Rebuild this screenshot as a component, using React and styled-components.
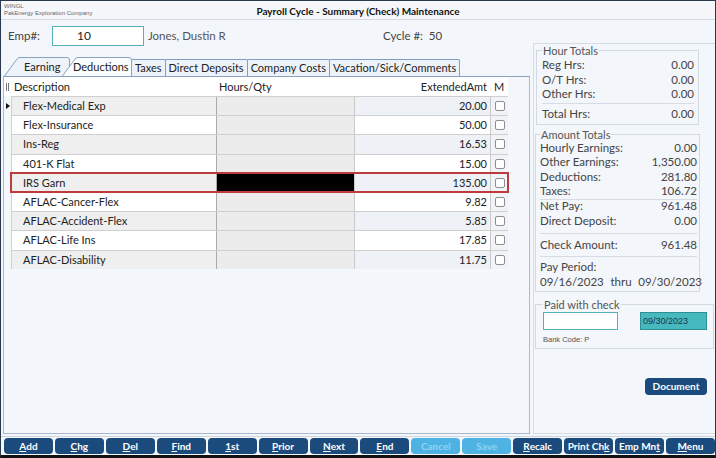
import React from "react";
import styled, { createGlobalStyle } from "styled-components";

const GlobalStyle = createGlobalStyle`
  html, body {
    margin: 0;
    padding: 0;
    background: #f3f6fa;
  }
  * {
    box-sizing: border-box;
  }
`;

const deductions = [
  { desc: "Flex-Medical Exp", amt: "20.00", current: true },
  { desc: "Flex-Insurance", amt: "50.00" },
  { desc: "Ins-Reg", amt: "16.53" },
  { desc: "401-K Flat", amt: "15.00" },
  { desc: "IRS Garn", amt: "135.00", highlight: true },
  { desc: "AFLAC-Cancer-Flex", amt: "9.82" },
  { desc: "AFLAC-Accident-Flex", amt: "5.85" },
  { desc: "AFLAC-Life Ins", amt: "17.85" },
  { desc: "AFLAC-Disability", amt: "11.75" },
];

const buttons = [
  { pre: "", u: "A", post: "dd" },
  { pre: "", u: "C", post: "hg" },
  { pre: "", u: "D", post: "el" },
  { pre: "", u: "F", post: "ind" },
  { pre: "", u: "1", post: "st" },
  { pre: "", u: "P", post: "rior" },
  { pre: "", u: "N", post: "ext" },
  { pre: "", u: "E", post: "nd" },
  { pre: "Cancel", u: "", post: "", disabled: true },
  { pre: "Save", u: "", post: "", disabled: true },
  { pre: "", u: "R", post: "ecalc" },
  { pre: "Print Ch", u: "k", post: "" },
  { pre: "Emp Mn", u: "t", post: "" },
  { pre: "", u: "M", post: "enu" },
];

function SlantShape({ width }) {
  return (
    <TabShape width={width} height="19" viewBox={`0 0 ${width} 19`}>
      <path
        d={`M0.5 19 L13 2 Q14 0.5 16 0.5 L${width - 3} 0.5 Q${width - 0.5} 0.5 ${width - 0.5} 3 L${width - 0.5} 19`}
        fill="currentColor"
        stroke="#8aa2c2"
        strokeWidth="1"
      />
    </TabShape>
  );
}

export default function App() {
  return (
    <Window>
      <GlobalStyle />
      <TitleBar>
        <Company>
          <span>WINGL</span>
          <span>PakEnergy Exploration Company</span>
        </Company>
        <Title>Payroll Cycle - Summary (Check) Maintenance</Title>
        <span />
      </TitleBar>

      <Body>
        <LeftColumn>
          <EmpRow>
            <Label>Emp#:</Label>
            <EmpInput>10</EmpInput>
            <EmpName>Jones, Dustin R</EmpName>
            <Label>Cycle #:&nbsp;&nbsp;50</Label>
          </EmpRow>

          <Tabs>
            <SlantTab $width={66} $z={1} $pad={20} $bg="#eef3fa">
              <SlantShape width={66} />
              <TabText>Earning</TabText>
            </SlantTab>
            <SlantTab $width={70} $z={3} $pad={11} $bg="#fbfcfe" $overlap>
              <SlantShape width={70} />
              <TabText>Deductions</TabText>
            </SlantTab>
            <Tab>Taxes</Tab>
            <Tab>Direct Deposits</Tab>
            <Tab>Company Costs</Tab>
            <Tab>Vacation/Sick/Comments</Tab>
          </Tabs>

          <GridFrame>
            <HeaderRow>
              <HeaderGrip>
                <Grip />
              </HeaderGrip>
              <HeaderCell>Description</HeaderCell>
              <HeaderCell>Hours/Qty</HeaderCell>
              <HeaderCell $right>ExtendedAmt</HeaderCell>
              <HeaderCell $center>M</HeaderCell>
            </HeaderRow>
            {deductions.map((d, i) => (
              <Row key={d.desc}>
                <Indicator>{d.current && <Arrow />}</Indicator>
                <Cells $highlight={d.highlight}>
                  <DescCell $alt={i % 2 === 1}>{d.desc}</DescCell>
                  <QtyCell $redacted={d.highlight} />
                  <AmtCell $alt={i % 2 === 1}>{d.amt}</AmtCell>
                  <CheckCell>
                    <Check />
                  </CheckCell>
                </Cells>
              </Row>
            ))}
          </GridFrame>
        </LeftColumn>

        <RightColumn>
          <Group $kind="hours">
            <Legend>Hour Totals</Legend>
            <Line>
              <span>Reg Hrs:</span>
              <span>0.00</span>
            </Line>
            <Line>
              <span>O/T Hrs:</span>
              <span>0.00</span>
            </Line>
            <Line>
              <span>Other Hrs:</span>
              <span>0.00</span>
            </Line>
            <Separator $m="1px 0 1px" />
            <Line $h={17}>
              <span>Total Hrs:</span>
              <span>0.00</span>
            </Line>
          </Group>

          <Group $kind="amounts">
            <Legend>Amount Totals</Legend>
            <Line>
              <span>Hourly Earnings:</span>
              <span>0.00</span>
            </Line>
            <Line>
              <span>Other Earnings:</span>
              <span>1,350.00</span>
            </Line>
            <Line>
              <span>Deductions:</span>
              <span>281.80</span>
            </Line>
            <Line>
              <span>Taxes:</span>
              <span>106.72</span>
            </Line>
            <Separator $m="0" />
            <Line $h={12}>
              <span>Net Pay:</span>
              <span>961.48</span>
            </Line>
            <Line $h={18}>
              <span>Direct Deposit:</span>
              <span>0.00</span>
            </Line>
            <Separator $m="3px 0 0" />
            <Line $h={22}>
              <span>Check Amount:</span>
              <span>961.48</span>
            </Line>
            <Separator $m="0" />
            <Line $h={19}>
              <span>Pay Period:</span>
            </Line>
            <Dates>
              <span>09/16/2023</span>
              <span>thru</span>
              <span>09/30/2023</span>
            </Dates>
          </Group>

          <Group $kind="paid">
            <Legend>Paid with check</Legend>
            <PaidRow>
              <CheckInput />
              <DateInput>09/30/2023</DateInput>
            </PaidRow>
            <BankCode>Bank Code: P</BankCode>
          </Group>

          <DocumentButton>Document</DocumentButton>
        </RightColumn>
      </Body>

      <Toolbar>
        {buttons.map((b, i) => (
          <ToolButton key={i} $disabled={b.disabled}>
            {b.pre}
            {b.u && <u>{b.u}</u>}
            {b.post}
          </ToolButton>
        ))}
      </Toolbar>
    </Window>
  );
}

const font = `"Lato", "Segoe UI", "Liberation Sans", sans-serif`;

const Window = styled.div`
  width: 716px;
  height: 458px;
  display: flex;
  flex-direction: column;
  background: #f3f6fa;
  border: 1px solid #2a3850;
  border-bottom: 3px solid #111;
  font-family: ${font};
  color: #333;
  overflow: hidden;
`;

const TitleBar = styled.div`
  height: 19px;
  flex: none;
  display: grid;
  grid-template-columns: 1fr auto 1fr;
  align-items: center;
  border-bottom: 1px solid #d5dbe4;
  background: #f5f7fa;
`;

const Company = styled.div`
  display: flex;
  flex-direction: column;
  padding-left: 3px;
  font-family: "Liberation Sans", sans-serif;
  font-size: 6px;
  line-height: 7px;
  color: #666;
`;

const Title = styled.div`
  font-size: 10px;
  font-weight: bold;
  color: #111;
  padding-top: 1px;
`;

const Body = styled.div`
  flex: 1;
  display: flex;
  min-height: 0;
`;

const LeftColumn = styled.div`
  width: 529px;
  display: flex;
  flex-direction: column;
  padding: 0 0 2px 2px;
`;

const EmpRow = styled.div`
  height: 37px;
  display: flex;
  align-items: flex-start;
  padding: 6px 0 0 5px;
`;

const Label = styled.div`
  font-size: 11.5px;
  color: #444;
  line-height: 20px;
`;

const EmpInput = styled.div`
  width: 92px;
  height: 20px;
  margin-left: 12px;
  border: 1.5px solid #52b3b6;
  background: #fff;
  font-size: 12px;
  line-height: 17px;
  padding-left: 24px;
  color: #222;
`;

const EmpName = styled.div`
  width: 239px;
  padding-left: 4px;
  font-size: 11.5px;
  line-height: 20px;
  color: #555;
`;

const Tabs = styled.div`
  height: 19px;
  display: flex;
  align-items: flex-end;
  padding-left: 1px;
`;

const SlantTab = styled.div`
  position: relative;
  width: ${(p) => p.$width}px;
  height: 19px;
  margin-left: ${(p) => (p.$overlap ? -8 : 0)}px;
  padding-left: ${(p) => p.$pad}px;
  z-index: ${(p) => p.$z};
  color: ${(p) => p.$bg};
  display: flex;
  align-items: center;
  overflow: hidden;
  white-space: nowrap;
`;

const TabShape = styled.svg`
  position: absolute;
  left: 0;
  top: 0;
  z-index: -1;
`;

const TabText = styled.span`
  font-size: 11px;
  color: #222;
`;

const Tab = styled.div`
  height: 17px;
  padding: 0 3px;
  border: 1px solid #7f9cc2;
  border-bottom: none;
  border-radius: 2px 2px 0 0;
  background: #eef3fa;
  font-size: 11px;
  line-height: 15px;
  color: #222;
  white-space: nowrap;
  margin-left: -1px;
  position: relative;
  z-index: 2;
`;

const GridFrame = styled.div`
  flex: 1;
  border: 1px solid #a9b8cc;
  border-top-color: #8aa2c2;
  background: #f4f7fb;
`;

const columns = `7px 205px 138px 136px 18px`;

const HeaderRow = styled.div`
  display: grid;
  grid-template-columns: ${columns};
  height: 19px;
  width: 504px;
  background: #fff;
  align-items: center;
  font-size: 11px;
  color: #222;
`;

const HeaderGrip = styled.div`
  display: flex;
  justify-content: center;
`;

const Grip = styled.div`
  width: 3px;
  height: 8px;
  border-left: 1px solid #777;
  border-right: 1px solid #777;
`;

const HeaderCell = styled.div`
  padding: 0 3px;
  text-align: ${(p) => (p.$right ? "right" : p.$center ? "center" : "left")};
  white-space: nowrap;
`;

const Row = styled.div`
  display: flex;
  width: 504px;
  height: 19.2px;
`;

const Indicator = styled.div`
  width: 7px;
  display: flex;
  align-items: center;
  justify-content: center;
`;

const Arrow = styled.div`
  width: 0;
  height: 0;
  border-top: 3.5px solid transparent;
  border-bottom: 3.5px solid transparent;
  border-left: 4px solid #111;
`;

const Cells = styled.div`
  flex: 1;
  display: grid;
  grid-template-columns: 205px 138px 136px 18px;
  border-top: 1px solid #cfcfcf;
  position: relative;
  z-index: ${(p) => (p.$highlight ? 1 : 0)};
  outline: ${(p) => (p.$highlight ? "2px solid #bf3a3c" : "none")};
  outline-offset: -1px;
  font-size: 11px;
  color: #222;
`;

const DescCell = styled.div`
  background: ${(p) => (p.$alt ? "#ffffff" : "#efefef")};
  border-left: 1px solid #cfcfcf;
  padding-left: 11px;
  line-height: 18px;
  white-space: nowrap;
`;

const QtyCell = styled.div`
  background: ${(p) => (p.$redacted ? "#000" : "#ececec")};
  border-left: 1px solid #aaa;
`;

const AmtCell = styled.div`
  background: ${(p) => (p.$alt ? "#ffffff" : "#eef2f7")};
  border-left: 1px solid #c9c9c9;
  padding-right: 3px;
  text-align: right;
  line-height: 18px;
`;

const CheckCell = styled.div`
  background: #f1f3f7;
  border-left: 1px solid #c9c9c9;
  display: flex;
  align-items: center;
  justify-content: center;
`;

const Check = styled.div`
  width: 10px;
  height: 10px;
  border: 1px solid #8e8e8e;
  border-radius: 2px;
  background: #fff;
`;

const RightColumn = styled.div`
  flex: 1;
  margin: 23px 0 2px 3px;
  border: 1px solid #d6dce5;
  border-right: none;
  display: flex;
  flex-direction: column;
  padding: 0 0 0 1px;
`;

const groupMargin = {
  hours: "0 16px 0 1px",
  amounts: "3px 15px 0 0",
  paid: "6px 1px 0 0",
};

const groupPadding = {
  hours: "1px 4px 2px 5px",
  amounts: "0 2px 3px 4px",
  paid: "0 6px 4px 7px",
};

const Group = styled.fieldset`
  margin: ${(p) => groupMargin[p.$kind]};
  padding: ${(p) => groupPadding[p.$kind]};
  border: 1px solid #d3d9e2;
  min-width: 0;
`;

const Legend = styled.legend`
  font-size: 11px;
  color: #555;
  padding: 0 1px;
  margin-left: 0;
  line-height: 13px;
`;

const Line = styled.div`
  display: flex;
  justify-content: space-between;
  font-size: 11.5px;
  color: #444;
  height: ${(p) => p.$h || 14.5}px;
  line-height: ${(p) => p.$h || 14.5}px;
`;

const Separator = styled.div`
  height: 1px;
  background: #d7dce4;
  margin: ${(p) => p.$m};
`;

const Dates = styled.div`
  display: flex;
  justify-content: space-between;
  font-size: 11.5px;
  color: #444;
  height: 12px;
  line-height: 12px;
  margin-right: -5px;
`;

const PaidRow = styled.div`
  display: flex;
  justify-content: space-between;
  align-items: center;
  margin-top: 1px;
`;

const CheckInput = styled.div`
  width: 75px;
  height: 18px;
  background: #fff;
  border: 1.5px solid #52b3b6;
`;

const DateInput = styled.div`
  width: 67px;
  height: 18px;
  background: #45b9bd;
  border: 1px solid #2f8f92;
  font-family: "Liberation Sans", sans-serif;
  font-size: 9px;
  line-height: 16px;
  padding-left: 2px;
  color: #1e3550;
`;

const BankCode = styled.div`
  font-family: "Liberation Sans", sans-serif;
  font-size: 7.5px;
  color: #555;
  margin-top: 5px;
`;

const DocumentButton = styled.div`
  align-self: flex-end;
  margin: 29px 8px 0 0;
  width: 62px;
  height: 17px;
  border-radius: 4px;
  background: #1b4b7d;
  color: #fff;
  font-size: 10px;
  font-weight: bold;
  display: flex;
  align-items: center;
  justify-content: center;
`;

const Toolbar = styled.div`
  height: 19px;
  flex: none;
  display: flex;
  gap: 2px;
  padding: 1px 0 1px 3px;
  border-top: 1px solid #cdd4de;
`;

const ToolButton = styled.div`
  flex: 1;
  border-radius: 4px;
  background: ${(p) => (p.$disabled ? "#4eb2e3" : "#1b4b7d")};
  color: ${(p) => (p.$disabled ? "#8fd2f2" : "#fff")};
  font-size: 10px;
  font-weight: bold;
  display: flex;
  align-items: center;
  justify-content: center;
  white-space: nowrap;
`;
